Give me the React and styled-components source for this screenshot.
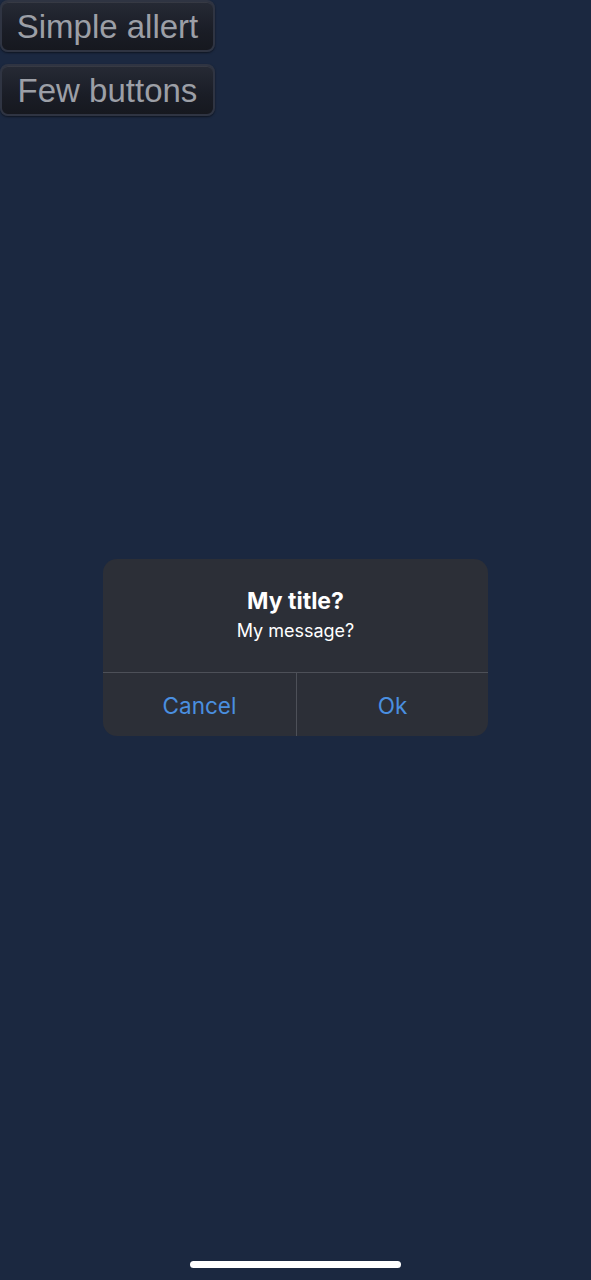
import React from 'react'
import styled, { createGlobalStyle } from 'styled-components'

const GlobalStyle = createGlobalStyle`
  html, body {
    margin: 0;
    padding: 0;
    background: #1b2840;
  }
  body {
    font-family: "Liberation Sans", Arial, sans-serif;
  }
`

const Screen = styled.div`
  width: 591px;
  height: 1280px;
  background: #1b2840;
  display: flex;
  flex-direction: column;
  position: relative;
  overflow: hidden;
`

const ButtonList = styled.div`
  display: flex;
  flex-direction: column;
  align-items: flex-start;
  gap: 12px;
`

const OldButton = styled.button`
  width: 215px;
  height: 52px;
  margin: 0;
  padding: 0;
  box-sizing: border-box;
  border: 2px solid #2f3442;
  border-radius: 8px;
  background: linear-gradient(#262a35, #1a1d26 60%, #16181f);
  box-shadow: inset 0 1px 0 rgba(255, 255, 255, 0.08), 0 1px 2px rgba(0, 0, 0, 0.5);
  color: #9c9fa6;
  font-family: "Liberation Sans", Arial, sans-serif;
  font-size: 33px;
  line-height: 1;
  text-align: center;
`

const Overlay = styled.div`
  position: absolute;
  inset: 0;
  display: flex;
  align-items: flex-start;
  justify-content: center;
  padding-top: 559px;
`

const Dialog = styled.div`
  width: 385px;
  background: #2c2f37;
  border-radius: 14px;
  overflow: hidden;
  display: flex;
  flex-direction: column;
  font-family: Inter, "Noto Sans", sans-serif;
`

const Body = styled.div`
  height: 114px;
  box-sizing: border-box;
  padding-top: 30px;
  display: flex;
  flex-direction: column;
  align-items: center;
  border-bottom: 1px solid #4d5058;
`

const Title = styled.div`
  color: #ffffff;
  font-size: 23px;
  font-weight: 700;
  line-height: 24px;
`

const Message = styled.div`
  color: #ffffff;
  font-size: 18px;
  line-height: 20px;
  margin-top: 8px;
`

const Actions = styled.div`
  display: grid;
  grid-template-columns: 193px 1fr;
  height: 63px;
`

const Action = styled.div`
  display: flex;
  align-items: center;
  justify-content: center;
  color: #4a8fe0;
  font-size: 22.5px;
  padding-top: 1px;
  border-left: ${p => (p.$divided ? '1px solid #4d5058' : 'none')};
`

const HomeIndicator = styled.div`
  position: absolute;
  left: 190px;
  bottom: 12px;
  width: 211px;
  height: 7px;
  border-radius: 4px;
  background: #ffffff;
`

export default function App() {
  return (
    <Screen>
      <GlobalStyle />
      <ButtonList>
        <OldButton>Simple allert</OldButton>
        <OldButton>Few buttons</OldButton>
      </ButtonList>
      <Overlay>
        <Dialog>
          <Body>
            <Title>My title?</Title>
            <Message>My message?</Message>
          </Body>
          <Actions>
            <Action>Cancel</Action>
            <Action $divided>Ok</Action>
          </Actions>
        </Dialog>
      </Overlay>
      <HomeIndicator />
    </Screen>
  )
}
